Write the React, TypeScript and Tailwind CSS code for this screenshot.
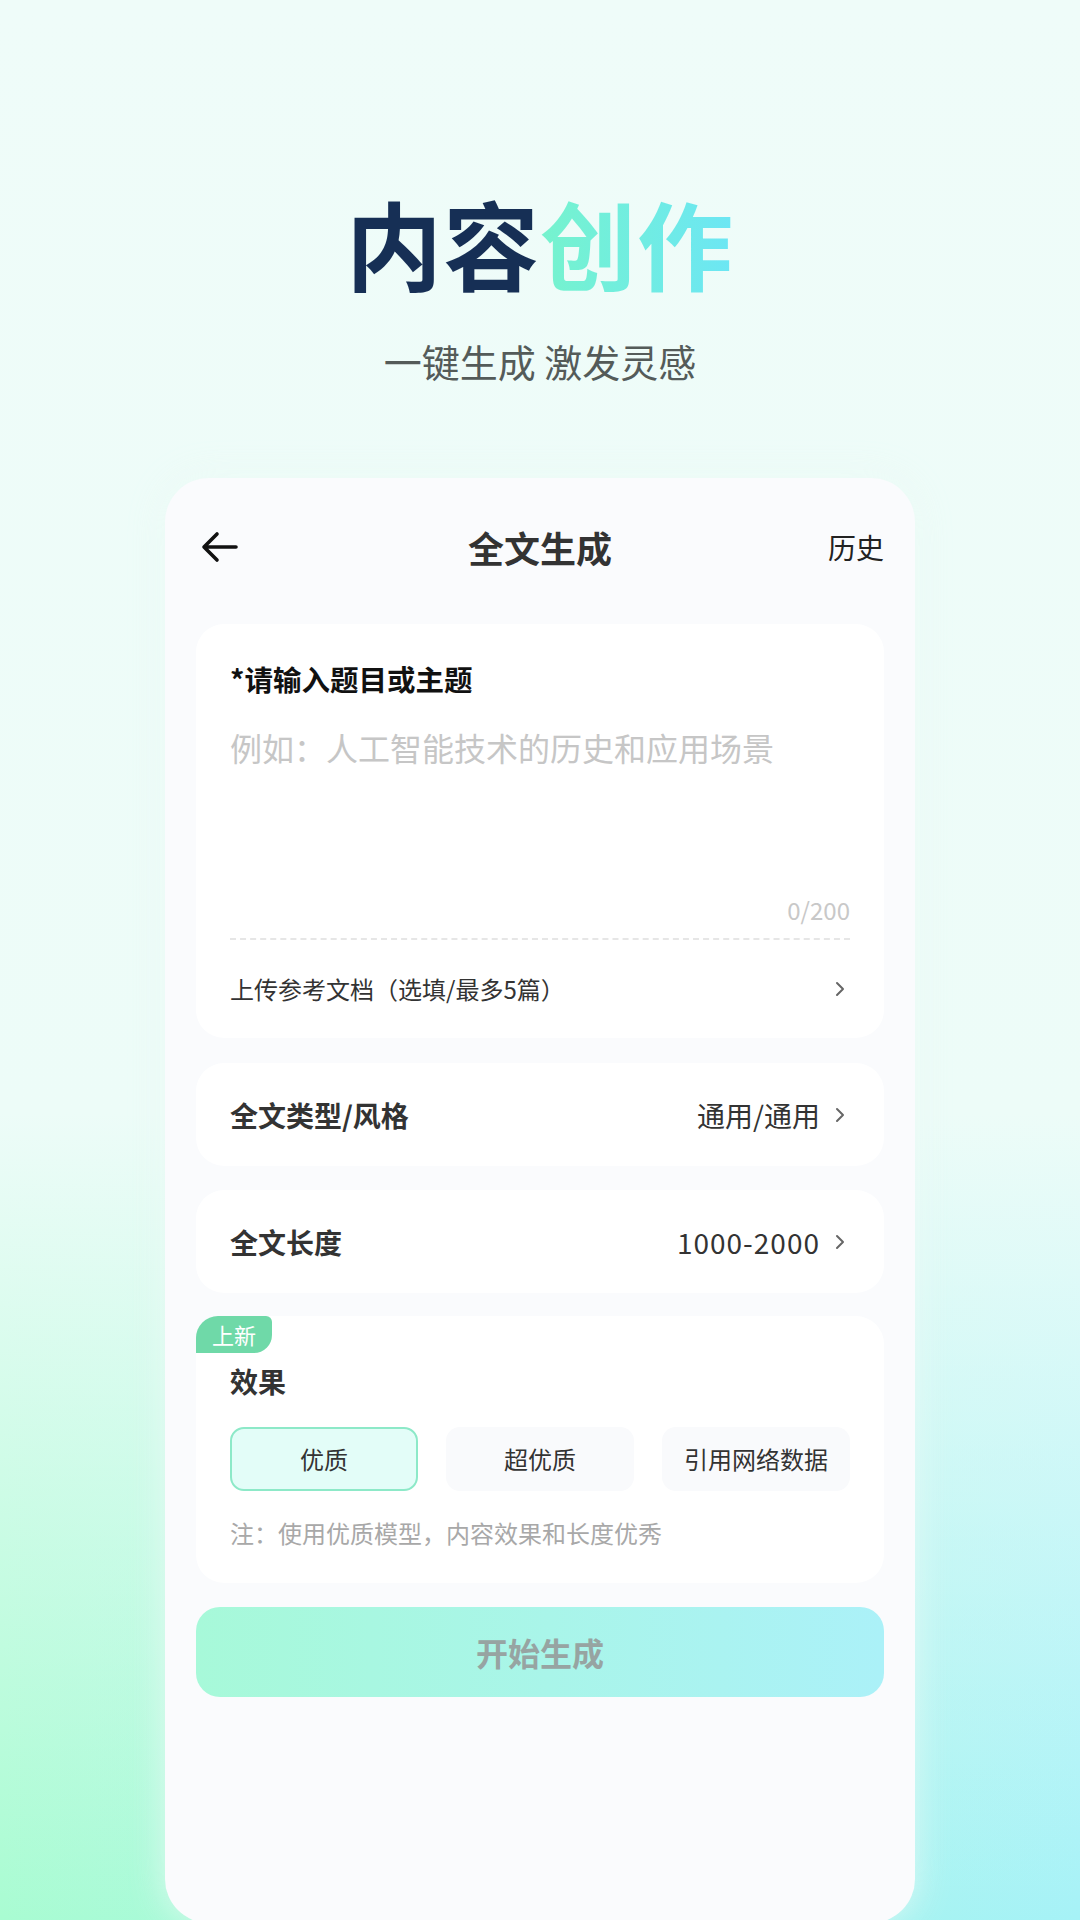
const ChevronRight = () => (
  <svg width="16" height="22" viewBox="0 0 16 22" fill="none">
    <path d="M5 5l6 6-6 6" stroke="#666" strokeWidth="2" strokeLinecap="round" strokeLinejoin="round" />
  </svg>
);

const BackArrow = () => (
  <svg width="38" height="34" viewBox="0 0 38 34" fill="none">
    <path d="M35 17H4M16 4L3 17l13 13" stroke="#111" strokeWidth="3.6" strokeLinecap="round" strokeLinejoin="round" />
  </svg>
);

const options = ["优质", "超优质", "引用网络数据"];

const App = () => {
  return (
    <div className="relative h-[1920px] w-[1080px] overflow-hidden font-['Noto_Sans_CJK_SC','Noto_Sans',sans-serif] bg-[linear-gradient(180deg,#effcf9_0%,#edfcf8_58%,rgba(237,252,248,0)_100%),linear-gradient(90deg,#a9fcd2_0%,#a8f6e6_50%,#a6f2f7_100%)]">
      <div className="flex flex-col items-center pt-[194px]">
        <h1 className="text-[96px] font-bold leading-none tracking-[1px]">
          <span className="text-[#162f55]">内容</span>
          <span className="bg-gradient-to-r from-[#76f3cd] to-[#6ce6f4] bg-clip-text text-transparent">创作</span>
        </h1>
        <p className="mt-[52px] text-[38px] leading-none text-[#545b59]">一键生成 激发灵感</p>
      </div>

      <div className="mx-[165px] mt-[98px] h-[1445px] w-[750px] rounded-[44px] bg-[#fafbfd] px-[31px] pt-[34px] shadow-[0_0_36px_rgba(235,250,245,0.8)]">
        <div className="grid h-[70px] grid-cols-[1fr_auto_1fr] items-center">
          <div className="pl-[5px]">
            <BackArrow />
          </div>
          <div className="text-[36px] font-semibold text-[#333]">全文生成</div>
          <div className="text-right text-[28px] text-[#222]">历史</div>
        </div>

        <div className="mt-[42px] rounded-[28px] bg-white px-[34px] pt-[37px]">
          <div className="text-[28.5px] font-bold leading-[36px] text-[#111]">*请输入题目或主题</div>
          <div className="mt-[28px] text-[32px] leading-[44px] text-[#c6c6c6]">例如：人工智能技术的历史和应用场景</div>
          <div className="mt-[126px] text-right text-[24px] leading-[30px] text-[#c8c8c8]">0/200</div>
          <div className="mt-[13px] border-t-2 border-dashed border-[#e6e6e6]"></div>
          <div className="flex h-[98px] items-center justify-between">
            <span className="text-[24px] text-[#333]">上传参考文档（选填/最多5篇）</span>
            <span className="mr-[2px]">
              <ChevronRight />
            </span>
          </div>
        </div>

        <div className="mt-[25px] flex h-[103px] items-center justify-between rounded-[28px] bg-white pl-[34px] pr-[36px]">
          <span className="text-[28px] font-semibold text-[#333]">全文类型/风格</span>
          <span className="flex items-center gap-[12px] text-[28px] text-[#333]">
            通用/通用
            <ChevronRight />
          </span>
        </div>

        <div className="mt-[24px] flex h-[103px] items-center justify-between rounded-[28px] bg-white pl-[34px] pr-[36px]">
          <span className="text-[28px] font-semibold text-[#333]">全文长度</span>
          <span className="flex items-center gap-[12px] text-[28px] text-[#333]">
            <span className="tracking-[1px]">1000-2000</span>
            <ChevronRight />
          </span>
        </div>

        <div className="relative mt-[23px] h-[267px] rounded-[28px] bg-white px-[34px] pt-[47px]">
          <div className="absolute left-0 top-0 flex h-[37px] w-[76px] items-center justify-center rounded-tl-[22px] rounded-tr-[6px] rounded-br-[18px] bg-[#6fd9a8] text-[22px] text-white">
            上新
          </div>
          <div className="text-[28px] font-semibold leading-[36px] text-[#333]">效果</div>
          <div className="mt-[28px] grid grid-cols-3 gap-[28px]">
            {options.map((item, i) => (
              <div
                key={item}
                className={
                  i === 0
                    ? "flex h-[64px] items-center justify-center rounded-[14px] border-2 border-[#8de9c8] bg-[#e3fdf8] text-[24px] text-[#333]"
                    : "flex h-[64px] items-center justify-center rounded-[14px] bg-[#f9fafc] text-[24px] text-[#333]"
                }
              >
                {item}
              </div>
            ))}
          </div>
          <div className="mt-[27px] text-[24px] leading-[30px] text-[#a8a8a8]">注：使用优质模型，内容效果和长度优秀</div>
        </div>

        <div className="mt-[24px] flex h-[90px] items-center justify-center rounded-[24px] bg-gradient-to-r from-[#a7f9d9] to-[#abf1f8] text-[32px] font-semibold text-[#97a4a2]">
          开始生成
        </div>
      </div>
    </div>
  );
};

export default App;
